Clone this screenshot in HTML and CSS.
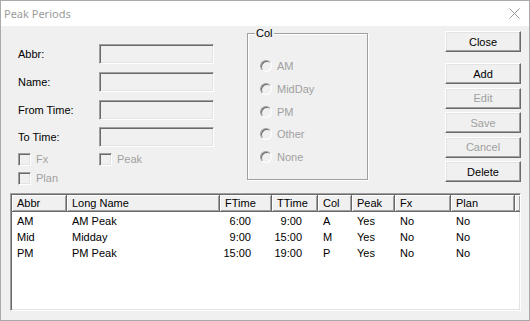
FILE: index.html
```html
<!DOCTYPE html>
<html lang="en">
<head>
    <meta charset="UTF-8">
    <title>Peak Periods</title>
    <link rel="stylesheet" href="styles.css">
</head>
<body>
    <div class="window">
        <div class="titlebar">
            <span class="title">Peak Periods</span>
            <svg class="close-x" width="11" height="11" viewBox="0 0 11 11">
                <path d="M0.5 0.5 L10.5 10.5 M10.5 0.5 L0.5 10.5" stroke="#9b9b9b" stroke-width="1" fill="none"/>
            </svg>
        </div>

        <div class="client">
            <div class="top">
                <!-- Edit fields -->
                <div class="form">
                    <div class="fields">
                        <span class="lbl">Abbr:</span><span class="edit"></span>
                        <span class="lbl">Name:</span><span class="edit"></span>
                        <span class="lbl">From Time:</span><span class="edit"></span>
                        <span class="lbl">To Time:</span><span class="edit"></span>
                    </div>
                    <div class="checks">
                        <span class="check"><span class="check-box"></span>Fx</span>
                        <span class="check"><span class="check-box"></span>Peak</span>
                        <span class="check"><span class="check-box"></span>Plan</span>
                    </div>
                </div>

                <!-- Colour group -->
                <fieldset class="group">
                    <legend>Col</legend>
                    <div class="radio"><span class="radio-dot"></span>AM</div>
                    <div class="radio"><span class="radio-dot"></span>MidDay</div>
                    <div class="radio"><span class="radio-dot"></span>PM</div>
                    <div class="radio"><span class="radio-dot"></span>Other</div>
                    <div class="radio"><span class="radio-dot"></span>None</div>
                </fieldset>

                <!-- Command buttons -->
                <div class="buttons">
                    <button class="btn btn-close">Close</button>
                    <div class="btn-stack">
                        <button class="btn">Add</button>
                        <button class="btn" disabled>Edit</button>
                        <button class="btn" disabled>Save</button>
                        <button class="btn" disabled>Cancel</button>
                        <button class="btn">Delete</button>
                    </div>
                </div>
            </div>

            <!-- Periods list -->
            <div class="listview">
                <div class="lv-head">
                    <div class="hd">Abbr</div>
                    <div class="hd">Long Name</div>
                    <div class="hd">FTime</div>
                    <div class="hd">TTime</div>
                    <div class="hd">Col</div>
                    <div class="hd">Peak</div>
                    <div class="hd">Fx</div>
                    <div class="hd">Plan</div>
                    <div class="hd hd-fill"></div>
                </div>
                <div class="lv-body">
                    <div class="lv-row">
                        <div>AM</div><div>AM Peak</div><div class="ftime">6:00</div><div class="ttime">9:00</div>
                        <div>A</div><div>Yes</div><div>No</div><div>No</div>
                    </div>
                    <div class="lv-row">
                        <div>Mid</div><div>Midday</div><div class="ftime">9:00</div><div class="ttime">15:00</div>
                        <div>M</div><div>Yes</div><div>No</div><div>No</div>
                    </div>
                    <div class="lv-row">
                        <div>PM</div><div>PM Peak</div><div class="ftime">15:00</div><div class="ttime">19:00</div>
                        <div>P</div><div>Yes</div><div>No</div><div>No</div>
                    </div>
                </div>
            </div>
        </div>
    </div>
</body>
</html>
```

FILE: styles.css
```css
body {
    margin: 0;
    padding: 0;
    background: #ffffff;
    font-family: "Liberation Sans", Arial, sans-serif;
    font-size: 11px;
    color: #000;
}

/* Window frame */
.window {
    width: 530px;
    height: 321px;
    box-sizing: border-box;
    border: 1px solid #aaaaaa;
    display: flex;
    flex-direction: column;
    background: #f0f0f0;
}
.titlebar {
    height: 25px;
    flex: none;
    background: #ffffff;
    display: flex;
    align-items: center;
    justify-content: space-between;
    padding: 0 9px 0 3px;
}
.title {
    font-family: "Noto Sans", "Open Sans", sans-serif;
    font-size: 11px;
    color: #9b9b9b;
}
.close-x {
    display: block;
}

/* Client area */
.client {
    flex: 1;
    display: flex;
    flex-direction: column;
}
.top {
    height: 167px;
    display: flex;
    align-items: flex-start;
}

/* Form */
.form {
    margin: 18px 0 0 17px;
    width: 196px;
}
.fields {
    display: grid;
    grid-template-columns: 81px 115px;
    grid-auto-rows: 20px;
    row-gap: 7.8px;
    align-items: center;
}
.edit {
    height: 20px;
    box-sizing: border-box;
    border: 1px solid;
    border-color: #a0a0a0 #ffffff #ffffff #a0a0a0;
    box-shadow: inset 1px 1px 0 #696969, inset -1px -1px 0 #e3e3e3;
    background: #f0f0f0;
}
.checks {
    margin-top: 6px;
    display: grid;
    grid-template-columns: 81px auto;
    grid-auto-rows: 13px;
    row-gap: 6px;
}
.check {
    display: flex;
    align-items: center;
    gap: 5px;
    color: #a0a0a0;
    line-height: 13px;
}
.check-box {
    width: 13px;
    height: 13px;
    box-sizing: border-box;
    border: 1px solid;
    border-color: #a0a0a0 #ffffff #ffffff #a0a0a0;
    box-shadow: inset 1px 1px 0 #696969, inset -1px -1px 0 #e3e3e3;
    background: #f0f0f0;
}

/* Group box */
.group {
    margin: 1px 0 0 33px;
    padding: 14.6px 0 0 12px;
    width: 121px;
    height: 153px;
    box-sizing: border-box;
    border: 1px solid #a0a0a0;
    box-shadow: inset 1px 1px 0 #ffffff, 1px 1px 0 #ffffff;
    min-width: 0;
}
.group legend {
    padding: 0 1px;
    margin-left: -5px;
    line-height: 13px;
    background: #f0f0f0;
}
.radio {
    height: 22.8px;
    display: flex;
    align-items: center;
    gap: 5px;
    color: #a0a0a0;
}
.radio-dot {
    width: 12px;
    height: 12px;
    box-sizing: border-box;
    border-radius: 50%;
    border: 1px solid;
    border-color: #a0a0a0 #ffffff #ffffff #a0a0a0;
    box-shadow: inset 1px 1px 0 #696969;
    background: #f0f0f0;
}

/* Buttons */
.buttons {
    margin: 5px 0 0 77px;
    width: 76px;
}
.btn {
    display: block;
    width: 76px;
    height: 21px;
    padding: 0;
    box-sizing: border-box;
    font-family: "Liberation Sans", Arial, sans-serif;
    font-size: 11px;
    color: #000;
    background: #f0f0f0;
    border: 1px solid;
    border-color: #ffffff #696969 #696969 #ffffff;
    box-shadow: inset -1px -1px 0 #a0a0a0, inset 1px 1px 0 #e3e3e3;
}
.btn:disabled {
    color: #a0a0a0;
}
.btn-close {
    margin-bottom: 11px;
}
.btn-stack {
    display: flex;
    flex-direction: column;
    gap: 3.5px;
}

/* List view */
.listview {
    margin-left: 9px;
    width: 511px;
    height: 118px;
    box-sizing: border-box;
    border: 1px solid;
    border-color: #a0a0a0 #ffffff #ffffff #a0a0a0;
    box-shadow: inset 1px 1px 0 #696969, inset -1px -1px 0 #e3e3e3;
    background: #ffffff;
    padding: 1px;
}
.lv-head,
.lv-row {
    display: grid;
    grid-template-columns: 55px 153px 52px 46px 34px 43px 56px 64px 1fr;
}
.lv-head {
    height: 17px;
}
.hd {
    background: #f0f0f0;
    line-height: 16px;
    padding-left: 5px;
    white-space: nowrap;
    overflow: hidden;
    border-right: 1px solid #696969;
    border-bottom: 1px solid #696969;
    box-shadow: inset 1px 1px 0 #ffffff, inset -1px -1px 0 #a0a0a0;
}
.hd-fill {
    border-right: none;
}
.lv-body {
    padding-top: 1px;
}
.lv-row div {
    height: 16px;
    line-height: 16px;
    padding-left: 5px;
    white-space: nowrap;
}
.lv-row .ftime {
    text-align: right;
    padding: 0 21px 0 0;
}
.lv-row .ttime {
    text-align: right;
    padding: 0 16px 0 0;
}
```
